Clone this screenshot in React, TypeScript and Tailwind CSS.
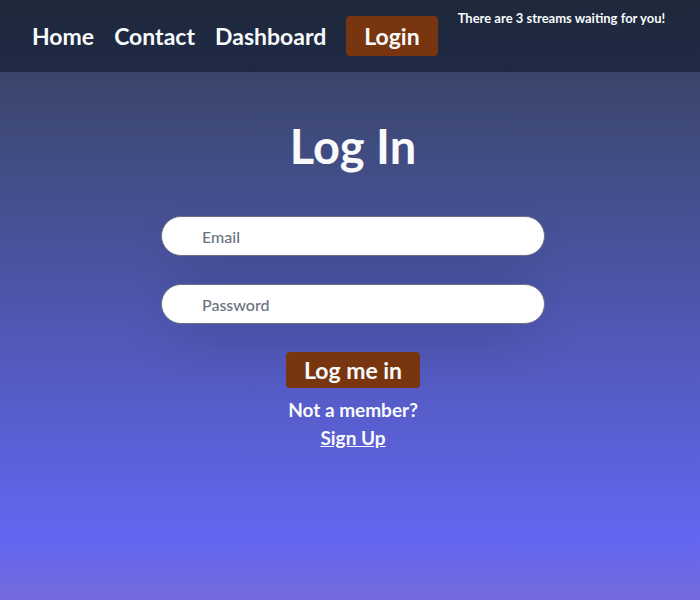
import React from 'react';

const navLinks = ['Home', 'Contact', 'Dashboard'];

type FieldProps = { id: string; label: string; type: string };

function Field({ id, label, type }: FieldProps) {
  return (
    <input
      id={id}
      type={type}
      aria-label={label}
      placeholder={label}
      className="block h-10 w-full rounded-full border border-gray-500 bg-white px-10 text-base font-medium text-gray-800 shadow-2xl placeholder:text-gray-500"
    />
  );
}

export default function App() {
  return (
    <div className="min-h-screen bg-[linear-gradient(to_bottom,#334155_0px,#6366f1_540px,#fb923c_1080px)] font-['Lato','Noto_Sans',sans-serif] text-slate-50">
      <header className="flex items-start bg-linear-to-b from-[#1e293b] to-[#1f2945] pt-4 pr-6 pb-4 pl-8">
        <nav className="flex shrink-0 items-center gap-5 text-[23px] leading-10 font-bold">
          {navLinks.map((name) => (
            <a key={name} href="#">
              {name}
            </a>
          ))}
          <button type="button" className="h-10 rounded bg-[#78350f] px-[18px] leading-10">
            Login
          </button>
        </nav>
        <p className="-mt-2 ml-5 text-[13px] leading-5 font-bold whitespace-nowrap">
          There are 3 streams waiting for you!
        </p>
      </header>
      <main className="flex flex-col items-center pt-12 pr-4 pl-[22px]">
        <h1 className="text-[47px] leading-[52px] font-bold">Log In</h1>
        <form className="mt-11 flex w-full max-w-96 flex-col items-center gap-7">
          <Field id="email" label="Email" type="email" />
          <Field id="password" label="Password" type="password" />
          <button
            type="submit"
            className="h-9 rounded bg-[#78350f] px-[18px] text-[23px] leading-9 font-bold"
          >
            Log me in
          </button>
        </form>
        <div className="mt-2 text-center text-[19px] leading-7 font-bold">
          <p>Not a member?</p>
          <a href="#" className="underline">
            Sign Up
          </a>
        </div>
      </main>
    </div>
  );
}
